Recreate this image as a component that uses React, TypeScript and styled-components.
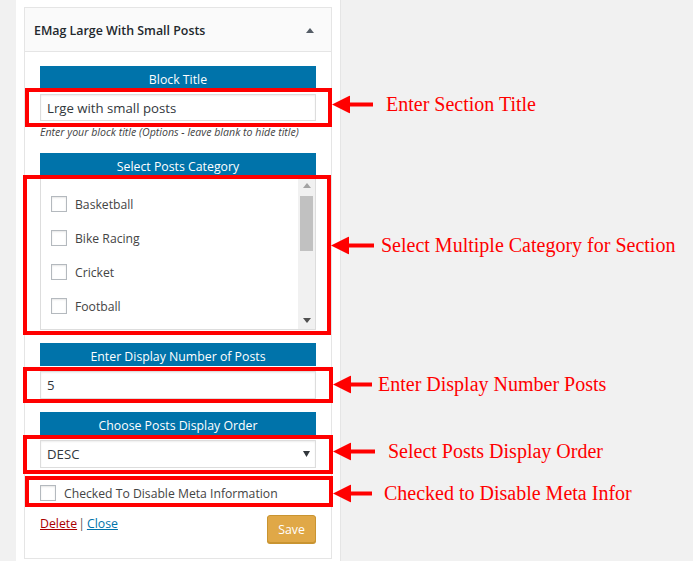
import React from "react";
import styled, { createGlobalStyle } from "styled-components";

const GlobalStyle = createGlobalStyle`
  html, body { margin: 0; padding: 0; background: #f1f1f1; }
  body { font-family: "Open Sans", "Noto Sans", sans-serif; }
  * { box-sizing: border-box; }
`;

const Page = styled.div`
  width: 693px;
  height: 561px;
  overflow: hidden;
  display: flex;
  background: #f1f1f1;
  padding-left: 16px;
`;

const Sidebar = styled.div`
  width: 325px;
  height: 561px;
  background: #fff;
  border-right: 1px solid #e5e5e5;
  padding: 7px 0 0 8px;
`;

const Widget = styled.div`
  width: 308px;
  border: 1px solid #e5e5e5;
  background: #fff;
`;

const WidgetHeader = styled.div`
  height: 44px;
  display: flex;
  align-items: center;
  justify-content: space-between;
  padding: 1px 17px 0 9px;
  background: #fafafa;
  border-bottom: 1px solid #e5e5e5;
  font-size: 12.4px;
  font-weight: 600;
  color: #23282d;
`;

const WidgetBody = styled.div`
  display: flex;
  flex-direction: column;
  gap: 13px;
  padding: 14px 15px 15px 15px;
`;

const Group = styled.div`
  display: flex;
  flex-direction: column;
`;

const LabelBar = styled.div`
  height: 23px;
  background: #0073aa;
  color: #fff;
  font-size: 12.3px;
  display: flex;
  align-items: center;
  justify-content: center;
  padding-top: 3px;
`;

const Marked = styled.div<{ $mt?: number }>`
  position: relative;
  margin-top: ${(p) => p.$mt ?? 0}px;
`;

const Frame = styled.div<{ $t: number; $l: number; $r: number; $b: number }>`
  position: absolute;
  top: ${(p) => p.$t}px;
  left: ${(p) => p.$l}px;
  right: ${(p) => p.$r}px;
  bottom: ${(p) => p.$b}px;
  border: 4px solid #ff0000;
  pointer-events: none;
  z-index: 2;
`;

const Callout = styled.div<{ $y: number; $gap: number }>`
  position: absolute;
  left: calc(100% + 4px);
  top: ${(p) => p.$y - 4}px;
  transform: translateY(-50%);
  display: flex;
  align-items: center;
  gap: ${(p) => p.$gap}px;
  white-space: nowrap;
  font-family: "Liberation Serif", "Times New Roman", serif;
  font-size: 20px;
  color: #ff0000;
`;

const TextInput = styled.div<{ $h: number }>`
  height: ${(p) => p.$h}px;
  border: 1px solid #ddd;
  box-shadow: inset 0 1px 2px rgba(0, 0, 0, 0.07);
  background: #fff;
  display: flex;
  align-items: center;
  padding: 0 6px;
  font-size: 13.2px;
  color: #32373c;
`;

const SelectBox = styled(TextInput)`
  justify-content: space-between;
  padding: 0 5px 0 6px;
`;

const Hint = styled.div`
  margin-top: 4px;
  height: 15px;
  font-size: 10.6px;
  font-style: italic;
  color: #444;
  line-height: 15px;
  white-space: nowrap;
`;

const ListBox = styled.div`
  height: 154px;
  border: 1px solid #ddd;
  background: #fff;
  display: flex;
`;

const ListItems = styled.div`
  flex: 1;
  padding: 10px 0 0 10px;
  display: flex;
  flex-direction: column;
`;

const ListItem = styled.div`
  height: 34px;
  display: flex;
  align-items: center;
  gap: 8px;
  font-size: 12.2px;
  color: #444;
`;

const Check = styled.span`
  width: 16px;
  height: 16px;
  border: 1px solid #b4b9be;
  background: #fff;
  box-shadow: inset 0 1px 2px rgba(0, 0, 0, 0.1);
  flex: none;
`;

const ScrollBar = styled.div`
  width: 17px;
  background: #f1f1f1;
  display: flex;
  flex-direction: column;
  align-items: center;
`;

const ScrollButton = styled.div`
  height: 17px;
  width: 17px;
  display: flex;
  align-items: center;
  justify-content: center;
`;

const Thumb = styled.div`
  width: 13px;
  height: 55px;
  margin-top: 2px;
  background: #c1c1c1;
`;

const Spacer = styled.div`
  flex: 1;
`;

const CheckRow = styled.div`
  height: 24px;
  display: flex;
  align-items: center;
  gap: 8px;
  font-size: 12.2px;
  color: #444;
`;

const Actions = styled.div`
  margin-top: -3px;
  display: flex;
  justify-content: space-between;
  align-items: flex-start;
`;

const Links = styled.div`
  display: flex;
  font-size: 12.3px;
  color: #555;
  line-height: 17px;
`;

const Separator = styled.span`
  margin: 0 2px 0 1px;
`;

const LinkText = styled.a<{ $danger?: boolean }>`
  color: ${(p) => (p.$danger ? "#a00" : "#0073aa")};
  text-decoration: underline;
  cursor: pointer;
`;

const SaveButton = styled.button`
  width: 49px;
  height: 28px;
  background: #e0a847;
  border: 1px solid #c99431;
  border-radius: 3px;
  color: #fff;
  font-family: "Open Sans", sans-serif;
  font-size: 12.3px;
  padding: 0;
  box-shadow: 0 1px 0 #c99431;
`;

type Note = { text: string; y: number; len: number; gap: number };

const Arrow = ({ len }: { len: number }) => (
  <svg width={len} height={18} viewBox={`0 0 ${len} 18`}>
    <polygon points="0,9 18,0 18,18" fill="#ff0000" />
    <rect x={17} y={7} width={len - 17} height={4} fill="#ff0000" />
  </svg>
);

const Annotated = ({
  children,
  inset,
  note,
  mt,
}: {
  children: React.ReactNode;
  inset: [number, number, number, number];
  note: Note;
  mt?: number;
}) => (
  <Marked $mt={mt}>
    {children}
    <Frame $t={inset[0]} $r={inset[1]} $b={inset[2]} $l={inset[3]}>
      <Callout $y={note.y} $gap={note.gap}>
        <Arrow len={note.len} />
        <span>{note.text}</span>
      </Callout>
    </Frame>
  </Marked>
);

const categories = ["Basketball", "Bike Racing", "Cricket", "Football"];

export default function App() {
  return (
    <>
      <GlobalStyle />
      <Page>
        <Sidebar>
          <Widget>
            <WidgetHeader>
              <span>EMag Large With Small Posts</span>
              <svg width="8" height="5" viewBox="0 0 8 5">
                <polygon points="4,0 8,5 0,5" fill="#555d66" />
              </svg>
            </WidgetHeader>
            <WidgetBody>
              <Group>
                <LabelBar>Block Title</LabelBar>
                <Annotated
                  mt={5}
                  inset={[-6, -16, -6, -15]}
                  note={{ text: "Enter Section Title", y: 16, len: 41, gap: 13 }}
                >
                  <TextInput $h={27}>Lrge with small posts</TextInput>
                </Annotated>
                <Hint>Enter your block title (Options - leave blank to hide title)</Hint>
              </Group>

              <Group>
                <LabelBar>Select Posts Category</LabelBar>
                <Annotated
                  inset={[-1, -15, -5, -17]}
                  note={{
                    text: "Select Multiple Category for Section",
                    y: 70,
                    len: 43,
                    gap: 7,
                  }}
                >
                  <ListBox>
                    <ListItems>
                      {categories.map((c) => (
                        <ListItem key={c}>
                          <Check />
                          <span>{c}</span>
                        </ListItem>
                      ))}
                    </ListItems>
                    <ScrollBar>
                      <ScrollButton>
                        <svg width="8" height="5" viewBox="0 0 8 5">
                          <polygon points="4,0 8,5 0,5" fill="#a3a3a3" />
                        </svg>
                      </ScrollButton>
                      <Thumb />
                      <Spacer />
                      <ScrollButton>
                        <svg width="8" height="5" viewBox="0 0 8 5">
                          <polygon points="0,0 8,0 4,5" fill="#505050" />
                        </svg>
                      </ScrollButton>
                    </ScrollBar>
                  </ListBox>
                </Annotated>
              </Group>

              <Group>
                <LabelBar>Enter Display Number of Posts</LabelBar>
                <Annotated
                  mt={5}
                  inset={[-4, -17, -4, -17]}
                  note={{ text: "Enter Display Number Posts", y: 17, len: 39, gap: 6 }}
                >
                  <TextInput $h={28}>5</TextInput>
                </Annotated>
              </Group>

              <Group>
                <LabelBar>Choose Posts Display Order</LabelBar>
                <Annotated
                  mt={5}
                  inset={[-5, -17, -6, -17]}
                  note={{ text: "Select Posts Display Order", y: 16, len: 42, gap: 13 }}
                >
                  <SelectBox $h={28}>
                    <span>DESC</span>
                    <svg width="7" height="6" viewBox="0 0 7 6">
                      <polygon points="0,0 7,0 3.5,6" fill="#32373c" />
                    </svg>
                  </SelectBox>
                </Annotated>
              </Group>

              <Annotated
                inset={[-5, -17, -2, -15]}
                note={{ text: "Checked to Disable Meta Infor", y: 17, len: 39, gap: 12 }}
              >
                <CheckRow>
                  <Check />
                  <span>Checked To Disable Meta Information</span>
                </CheckRow>
              </Annotated>

              <Actions>
                <Links>
                  <LinkText $danger>Delete</LinkText>
                  <Separator>|</Separator>
                  <LinkText>Close</LinkText>
                </Links>
                <SaveButton>Save</SaveButton>
              </Actions>
            </WidgetBody>
          </Widget>
        </Sidebar>
      </Page>
    </>
  );
}
